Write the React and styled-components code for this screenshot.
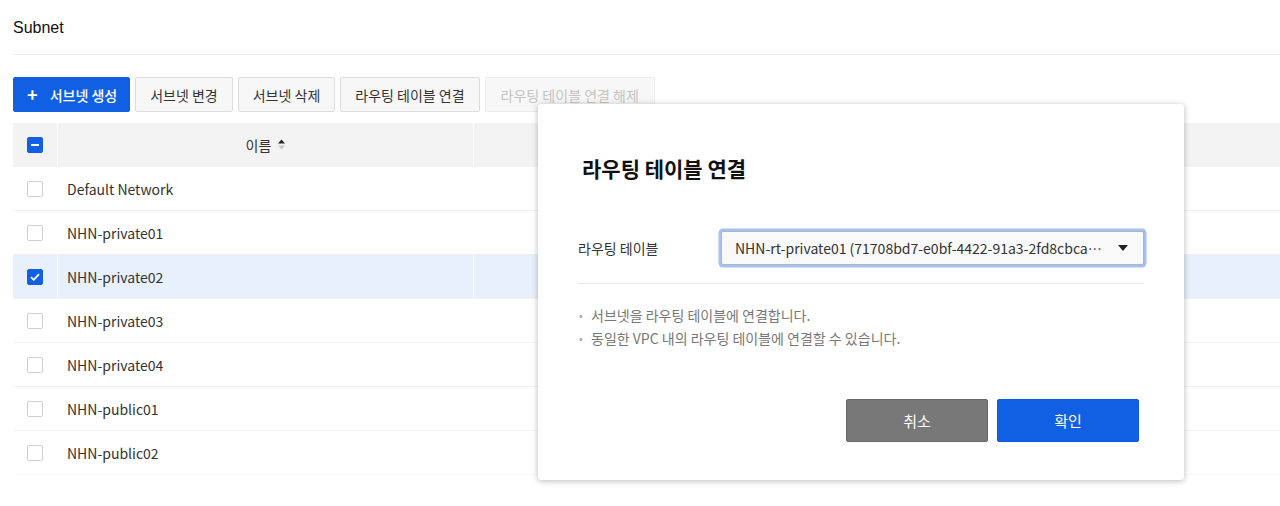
import React from 'react';
import styled, { createGlobalStyle } from 'styled-components';

const GlobalStyle = createGlobalStyle`
  html, body { margin: 0; padding: 0; background: #fff; }
  body {
    font-family: "Noto Sans CJK KR", "Noto Sans", sans-serif;
    color: #333;
    -webkit-font-smoothing: antialiased;
  }
`;

const Page = styled.div`
  position: relative;
  width: 1280px;
  height: 506px;
  overflow: hidden;
  padding-left: 13px;
  box-sizing: border-box;
`;

const Title = styled.h2`
  margin: 0;
  padding-top: 17px;
  height: 37px;
  font-family: "Liberation Sans", "Noto Sans CJK KR", sans-serif;
  font-size: 16px;
  font-weight: normal;
  color: #111;
  line-height: 22px;
  border-bottom: 1px solid #ececec;
`;

const Toolbar = styled.div`
  display: flex;
  gap: 5px;
  margin-top: 22px;
  height: 35px;
`;

const ToolButton = styled.button`
  height: 35px;
  padding: ${(p) => (p.$primary ? '0 12px 0 13px' : p.disabled ? '0 15px' : '0 14px')};
  font-family: inherit;
  font-size: 14px;
  border-radius: 2px;
  display: flex;
  align-items: center;
  gap: 12px;
  cursor: pointer;
  border: 1px solid ${(p) => (p.$primary ? '#1160e4' : p.disabled ? '#ececec' : '#dcdcdc')};
  background: ${(p) => (p.$primary ? '#1160e4' : '#f7f7f7')};
  color: ${(p) => (p.$primary ? '#fff' : p.disabled ? '#c4c4c4' : '#333')};
  font-weight: ${(p) => (p.$primary ? 500 : 400)};
`;

const Plus = styled.span`
  font-size: 18px;
  font-weight: 700;
  line-height: 1;
  margin-top: -2px;
`;

const Table = styled.div`
  margin-top: 11px;
`;

const Row = styled.div`
  display: grid;
  grid-template-columns: 45px 416px 1fr;
  height: 43px;
  background: ${(p) => (p.$head ? '#f3f3f3' : p.$selected ? '#e8f0fc' : '#fff')};
  border-bottom: 1px solid ${(p) => (p.$head ? '#f3f3f3' : p.$last ? '#fafafa' : '#f1f1f1')};
`;

const Cell = styled.div`
  display: flex;
  align-items: center;
  justify-content: ${(p) => (p.$center ? 'center' : 'flex-start')};
  padding-left: ${(p) => (p.$pad ? '9px' : '0')};
  font-size: 14px;
  color: #333;
  border-right: ${(p) => (p.$line ? '1px solid rgba(255,255,255,0.85)' : 'none')};
`;

const Check = styled.span`
  width: 16px;
  height: 16px;
  box-sizing: border-box;
  border-radius: 2px;
  border: 1px solid ${(p) => (p.$on ? '#1160e4' : '#cfcfcf')};
  background: ${(p) => (p.$on ? '#1160e4' : '#fff')};
  display: inline-flex;
  align-items: center;
  justify-content: center;
  margin-left: -1px;
`;

const SortIcon = styled.svg`
  margin-left: 7px;
`;

const Overlay = styled.div`
  position: absolute;
  left: 538px;
  top: 104px;
  width: 646px;
  height: 376px;
  box-sizing: border-box;
  background: #fff;
  border-radius: 3px;
  box-shadow: 0 1px 6px rgba(0, 0, 0, 0.28);
  padding: 50px 40px 38px 40px;
  display: flex;
  flex-direction: column;
`;

const ModalTitle = styled.h3`
  margin: 0 0 0 4px;
  font-size: 21px;
  font-weight: 700;
  line-height: 28px;
  color: #111;
`;

const FormRow = styled.div`
  display: flex;
  align-items: center;
  margin-top: 49px;
  padding-bottom: 18px;
  border-bottom: 1px solid #e6e6e6;
`;

const Label = styled.div`
  flex: 0 0 143px;
  font-size: 14px;
  color: #333;
`;

const Select = styled.div`
  flex: 1;
  min-width: 0;
  height: 34px;
  box-sizing: border-box;
  border: 1px solid #b5b5b5;
  border-radius: 2px;
  background: #f9f9f9;
  box-shadow: 0 0 0 2.5px #a3c1f5;
  display: flex;
  align-items: center;
  padding: 0 15px 0 13px;
  font-size: 14px;
  color: #333;
`;

const SelectText = styled.span`
  flex: 1;
  min-width: 0;
  white-space: nowrap;
  overflow: hidden;
  text-overflow: ellipsis;
  padding-right: 12px;
`;

const Notes = styled.ul`
  list-style: none;
  margin: 20px 0 0;
  padding: 0;
  font-size: 14px;
  line-height: 23px;
  color: #777;
`;

const Note = styled.li`
  display: flex;
  &::before {
    content: "•";
    color: #aaa;
    width: 12px;
    margin-left: 1px;
    font-size: 11px;
  }
`;

const Actions = styled.div`
  margin-top: auto;
  display: flex;
  justify-content: flex-end;
  gap: 9px;
  padding-right: 5px;
`;

const ActionButton = styled.button`
  width: 142px;
  height: 43px;
  border-radius: 2px;
  font-family: inherit;
  font-size: 15px;
  color: #fff;
  cursor: pointer;
  border: 1px solid ${(p) => (p.$primary ? '#0f5bd9' : '#666')};
  background: ${(p) => (p.$primary ? '#1160e4' : '#787878')};
`;

const subnets = [
  'Default Network',
  'NHN-private01',
  'NHN-private02',
  'NHN-private03',
  'NHN-private04',
  'NHN-public01',
  'NHN-public02',
];

const CheckMark = () => (
  <svg width="10" height="8" viewBox="0 0 10 8">
    <path d="M1 4.2 L3.8 6.8 L9 1.2" fill="none" stroke="#fff" strokeWidth="1.8" />
  </svg>
);

export default function App() {
  return (
    <>
      <GlobalStyle />
      <Page>
        <Title>Subnet</Title>
        <Toolbar>
          <ToolButton $primary>
            <Plus>+</Plus>서브넷 생성
          </ToolButton>
          <ToolButton>서브넷 변경</ToolButton>
          <ToolButton>서브넷 삭제</ToolButton>
          <ToolButton>라우팅 테이블 연결</ToolButton>
          <ToolButton disabled>라우팅 테이블 연결 해제</ToolButton>
        </Toolbar>

        <Table>
          <Row $head>
            <Cell $center $line>
              <Check $on>
                <svg width="8" height="2" viewBox="0 0 8 2">
                  <rect width="8" height="2" fill="#fff" />
                </svg>
              </Check>
            </Cell>
            <Cell $center $line>
              이름
              <SortIcon width="7" height="11" viewBox="0 0 7 11">
                <path d="M3.5 0.5 L7 4.5 H0 Z" fill="#222" />
                <path d="M3.5 10.5 L7 6.5 H0 Z" fill="#c8c8c8" />
              </SortIcon>
            </Cell>
            <Cell />
          </Row>
          {subnets.map((name, i) => {
            const selected = name === 'NHN-private02';
            return (
              <Row key={name} $selected={selected} $last={i === subnets.length - 1}>
                <Cell $center $line={selected}>
                  <Check $on={selected}>{selected && <CheckMark />}</Check>
                </Cell>
                <Cell $pad $line={selected}>{name}</Cell>
                <Cell />
              </Row>
            );
          })}
        </Table>

        <Overlay>
          <ModalTitle>라우팅 테이블 연결</ModalTitle>
          <FormRow>
            <Label>라우팅 테이블</Label>
            <Select>
              <SelectText>NHN-rt-private01 (71708bd7-e0bf-4422-91a3-2fd8cbca5d3e)</SelectText>
              <svg width="10" height="6" viewBox="0 0 10 6">
                <path d="M0 0 H10 L5 6 Z" fill="#222" />
              </svg>
            </Select>
          </FormRow>
          <Notes>
            <Note>서브넷을 라우팅 테이블에 연결합니다.</Note>
            <Note>동일한 VPC 내의 라우팅 테이블에 연결할 수 있습니다.</Note>
          </Notes>
          <Actions>
            <ActionButton>취소</ActionButton>
            <ActionButton $primary>확인</ActionButton>
          </Actions>
        </Overlay>
      </Page>
    </>
  );
}
